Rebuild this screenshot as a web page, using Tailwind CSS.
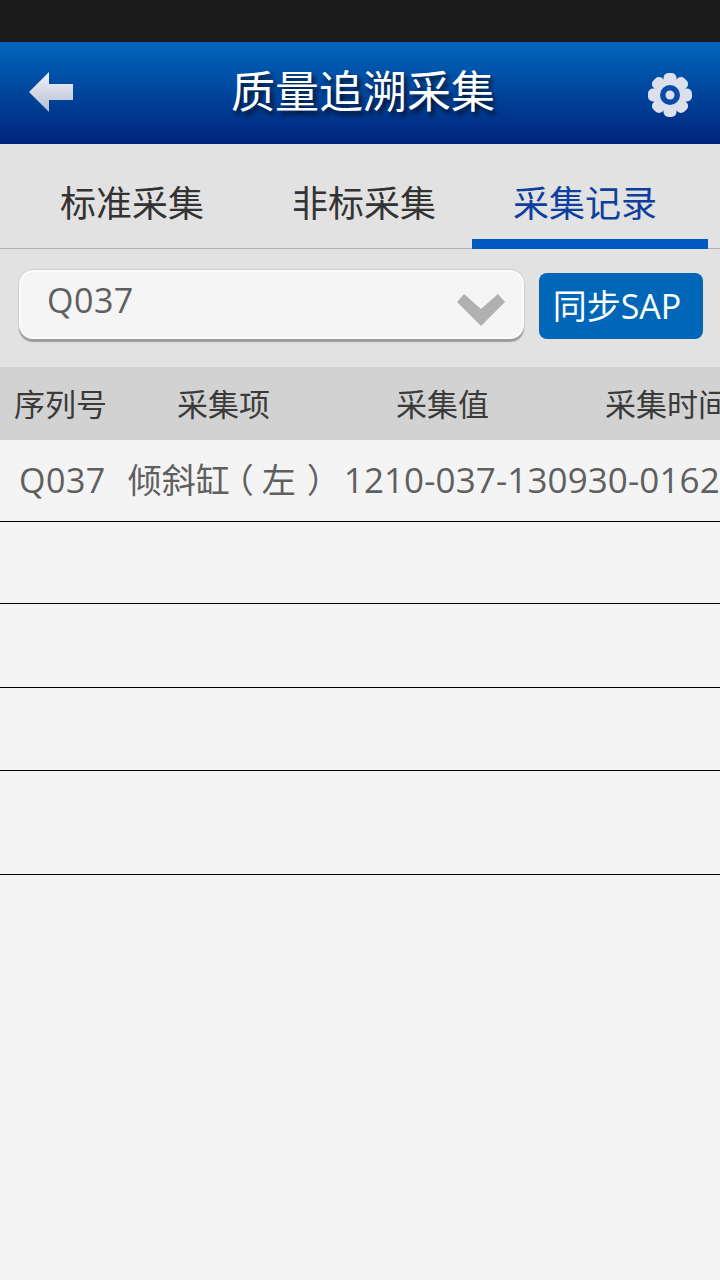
<!DOCTYPE html>
<html lang="zh">
<head>
  <meta charset="UTF-8">
  <meta name="viewport" content="width=device-width, initial-scale=1.0">
  <title>质量追溯采集</title>
  <script src="https://cdn.jsdelivr.net/npm/@tailwindcss/browser@4"></script>
</head>
<body class="bg-[#f4f4f4] font-['Open_Sans','Noto_Sans_CJK_SC',sans-serif] overflow-hidden">
<div class="w-[720px] h-[1280px] flex flex-col overflow-hidden">
  <div class="h-[42px] bg-[#1b1b1b] shrink-0"></div>
  <header class="h-[102px] shrink-0 flex items-center justify-between pl-[28px] pr-[28px] bg-gradient-to-b from-[#0066bc] to-[#00247c]">
    <svg width="46" height="42" viewBox="0 0 46 42"><defs><linearGradient id="a" x1="0" y1="0" x2="0" y2="1"><stop offset="0" stop-color="#f2f3f7"/><stop offset="1" stop-color="#b4bed2"/></linearGradient></defs><path d="M1 20 21 0V12H45V28H21V40z" fill="url(#a)"/></svg>
    <h1 class="text-white text-[44px] leading-none mb-[4px] ml-[4px] [text-shadow:3px_4px_4px_rgba(0,0,0,0.7)]">质量追溯采集</h1>
    <svg class="mt-[4px]" width="44" height="44" viewBox="0 0 44 44" fill="#dbe0ec">
      <circle cx="22" cy="22" r="16"/>
      <rect x="15.500" y="0" width="13" height="44" rx="5"/>
      <rect x="0" y="15.500" width="44" height="13" rx="5"/>
      <rect x="15.500" y="0" width="13" height="44" rx="5" transform="rotate(45 22 22)"/>
      <rect x="0" y="15.500" width="44" height="13" rx="5" transform="rotate(45 22 22)"/>
      <circle cx="22" cy="22" r="10" fill="#0a4aa8"/>
      <circle cx="22" cy="22" r="4.500"/>
    </svg>
  </header>
  <nav class="h-[105px] shrink-0 bg-[#e2e2e2] border-b border-[#b0b0b0] flex">
    <div class="w-[264px] flex items-center justify-center pt-[16px] text-[36px] text-[#333]">标准采集</div>
    <div class="w-[200px] flex items-center justify-center pt-[16px] text-[36px] text-[#333]">非标采集</div>
    <div class="w-[236px] ml-[8px] flex items-center justify-center pt-[24px] pr-[10px] text-[36px] text-[#0f3f9e] border-b-[10px] border-[#0058c0] h-[105px]">采集记录</div>
  </nav>
  <div class="h-[118px] shrink-0 bg-[#e2e2e2] flex items-start pt-[21px] pl-[19px] gap-[15px]">
    <div class="w-[505px] h-[69px] rounded-[14px] border-2 border-[#fbfbfb] bg-[#f5f5f5] shadow-[0_3px_1px_#9c9c9c,0_0_2px_#b0b0b0] flex justify-between pl-[26px] pr-[17px]">
      <span class="text-[34px] tracking-[0.5px] text-[#5f5f5f] leading-[57px]">Q037</span>
      <svg class="mt-[22px]" width="48" height="32" viewBox="0 0 48 32"><path d="M0 8 7 0 24 15 41 0 48 8 24 32z" fill="#b0b0b0"/></svg>
    </div>
    <button class="w-[164px] h-[66px] mt-[3px] pr-[8px] rounded-[8px] bg-[#0066b8] text-white text-[34px]">同步SAP</button>
  </div>
  <div class="h-[73px] shrink-0 bg-[#d2d2d2] flex items-center pt-[2px] text-[31px] text-[#3a3a3a] whitespace-nowrap">
    <span class="ml-[14px]">序列号</span>
    <span class="ml-[70px]">采集项</span>
    <span class="ml-[126px]">采集值</span>
    <span class="ml-[116px]">采集时间</span>
  </div>
  <div class="h-[82px] shrink-0 border-b border-black flex items-center text-[34px] text-[#5f5f5f] whitespace-nowrap">
    <span class="ml-[19px] tracking-[0.5px]">Q037</span>
    <span class="ml-[22px]">倾斜缸<span class="-ml-[10px] mr-[8px]">（</span>左<span class="ml-[11px] -mr-[9px]">）</span></span>
    <span class="ml-[12px] text-[35px] tracking-[0.1px]">1210-037-130930-0162</span>
  </div>
  <div class="h-[82px] shrink-0 border-b border-black"></div>
  <div class="h-[84px] shrink-0 border-b border-black"></div>
  <div class="h-[83px] shrink-0 border-b border-black"></div>
  <div class="h-[104px] shrink-0 border-b border-black"></div>
</div>
</body>
</html>
